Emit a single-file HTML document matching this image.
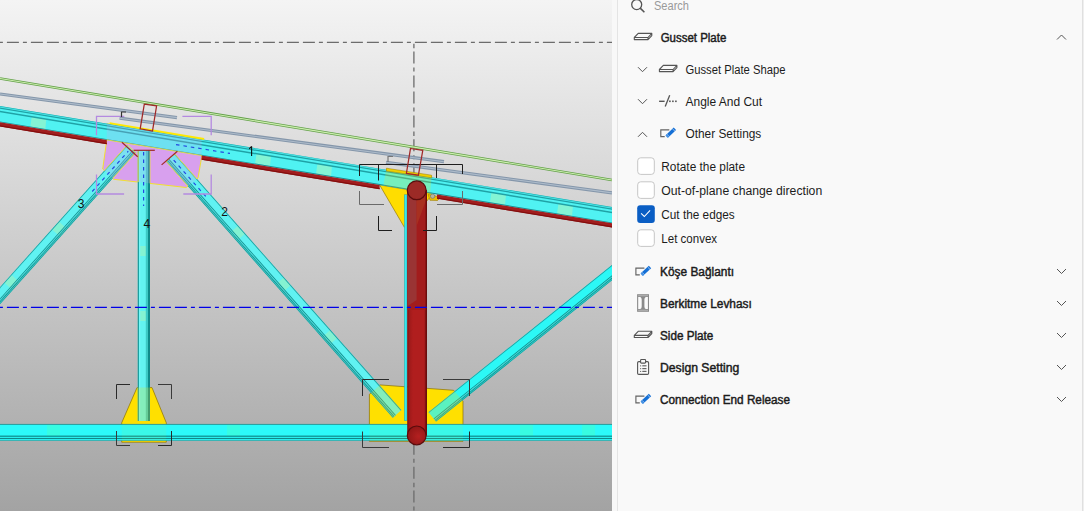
<!DOCTYPE html>
<html><head><meta charset="utf-8"><style>
html,body{margin:0;padding:0;width:1084px;height:511px;overflow:hidden;background:#f9f9f9}
svg{display:block}
</style></head><body>
<svg width="1084" height="511" viewBox="0 0 1084 511">
<defs><linearGradient id="bg" x1="0" y1="0" x2="0" y2="1"><stop offset="0" stop-color="#f4f4f4"/><stop offset="1" stop-color="#a3a3a3"/></linearGradient><linearGradient id="col" x1="0" y1="0" x2="1" y2="0"><stop offset="0" stop-color="#7a1212"/><stop offset="0.12" stop-color="#a01a1a"/><stop offset="0.3" stop-color="#b01e1e"/><stop offset="0.85" stop-color="#b01e1e"/><stop offset="0.93" stop-color="#981818"/><stop offset="1" stop-color="#5a0a0a"/></linearGradient><radialGradient id="cap" cx="0.6" cy="0.55" r="0.7"><stop offset="0" stop-color="#b42020"/><stop offset="1" stop-color="#8a1414"/></radialGradient><clipPath id="vp"><rect x="0" y="0" width="612" height="511"/></clipPath><clipPath id="memclip"><polygon points="-8.83,297.00 127.25,145.00 135.75,152.60 -0.34,304.60"/><polygon points="174.67,153.82 401.37,410.12 392.83,417.68 166.13,161.38"/><polygon points="428.54,412.22 658.54,227.53 666.06,236.89 436.06,421.58"/><polygon points="137.80,150.00 150.00,150.00 150.00,421.00 137.80,421.00"/><polygon points="-5.00,105.17 617.00,207.83 617.00,224.13 -5.00,121.47"/></clipPath><clipPath id="pinkclip"><polygon points="106.80,123.63 201.60,139.27 201.60,157.40 198.00,178.00 186.30,187.50 113.70,179.30 102.70,169.00 106.80,139.93"/></clipPath><clipPath id="chordclip"><rect x="-2" y="424.2" width="616" height="16.4"/></clipPath></defs>
<g clip-path="url(#vp)">
<rect x="0" y="0" width="612" height="511" fill="url(#bg)"/>
<line x1="-3.00" y1="42.30" x2="612.00" y2="42.30" stroke="#6c6c6c" stroke-width="1.3" stroke-dasharray="12 4 4 4 12 4 12 4 4 4" stroke-dashoffset="54.1"/>
<line x1="413.90" y1="43.70" x2="413.90" y2="511.00" stroke="#6c6c6c" stroke-width="1.3" stroke-dasharray="4.6 3.2 12 4 4 4 12 4 12 4 4 4 12 4"/>
<line x1="0.00" y1="78.50" x2="612.00" y2="180.00" stroke="#62a048" stroke-width="2.7"/>
<line x1="0.00" y1="78.50" x2="612.00" y2="180.00" stroke="#cdeeb0" stroke-width="1.1"/>
<line x1="0.00" y1="94.00" x2="177.00" y2="117.60" stroke="#8496aa" stroke-width="3.2"/>
<line x1="0.00" y1="94.00" x2="177.00" y2="117.60" stroke="#aebccb" stroke-width="1.1"/>
<line x1="119.60" y1="118.20" x2="444.00" y2="161.70" stroke="#8496aa" stroke-width="3.2"/>
<line x1="119.60" y1="118.20" x2="444.00" y2="161.70" stroke="#aebccb" stroke-width="1.1"/>
<line x1="386.00" y1="162.30" x2="612.00" y2="192.90" stroke="#8496aa" stroke-width="3.2"/>
<line x1="386.00" y1="162.30" x2="612.00" y2="192.90" stroke="#aebccb" stroke-width="1.1"/>
<polygon points="106.80,123.63 201.60,139.27 201.60,157.40 198.00,178.00 186.30,187.50 113.70,179.30 102.70,169.00 106.80,139.93" fill="#d8a0ee" stroke="#f2e030" stroke-width="1"/>
<polygon points="386.40,168.60 431.60,175.80 430.20,193.30 383.40,185.57" fill="#ffe000"/>
<polygon points="379.60,184.95 433.00,193.76 404.40,227.30" fill="#ffdd00" stroke="#9a7a00" stroke-width="0.7"/>
<polygon points="428.00,194.50 441.00,197.00 437.50,200.50 430.00,200.30" fill="#f0c000" stroke="#9a7a00" stroke-width="0.6"/>
<circle cx="432.6" cy="196.2" r="2.2" fill="#b8b8a0" stroke="#707060" stroke-width="0.6"/>
<polygon points="369.40,394.30 380.00,384.90 453.60,390.30 463.00,401.00 463.00,441.30 369.40,441.30" fill="#ffe000" stroke="#8a7000" stroke-width="0.7"/>
<polygon points="137.00,387.60 152.00,387.60 166.30,422.80 166.30,442.20 121.70,442.20 121.70,422.80" fill="#ffe000" stroke="#8a7000" stroke-width="0.7"/>
<polygon points="-8.83,297.00 127.25,145.00 135.75,152.60 -0.34,304.60" fill="#60f2f2"/>
<polygon points="4.58,282.92 11.58,275.10 19.18,281.90 12.18,289.72" fill="#84f2d2"/>
<polygon points="52.27,229.65 59.27,221.83 66.87,228.63 59.87,236.46" fill="#84f2d2"/>
<polygon points="-8.83,297.00 127.25,145.00 127.85,145.53 -8.24,297.53" fill="#1c9c9c"/>
<polygon points="-3.24,302.00 132.84,150.00 133.51,150.60 -2.57,302.60" fill="#12908e"/>
<polygon points="-2.57,302.60 133.51,150.60 134.18,151.20 -1.90,303.20" fill="#4ad4d4"/>
<polygon points="-1.90,303.20 134.18,151.20 134.85,151.80 -1.23,303.80" fill="#12908e"/>
<polygon points="-1.23,303.80 134.85,151.80 135.23,152.14 -0.86,304.14" fill="#3cc0c0"/>
<polygon points="-0.86,304.14 135.23,152.14 135.75,152.60 -0.34,304.60" fill="#12908e"/>
<polygon points="174.67,153.82 401.37,410.12 392.83,417.68 166.13,161.38" fill="#60f2f2"/>
<polygon points="237.72,226.02 244.68,233.88 237.04,240.64 230.08,232.77" fill="#84f2d2"/>
<polygon points="283.48,277.75 290.44,285.62 282.80,292.37 275.84,284.51" fill="#84f2d2"/>
<polygon points="329.99,330.33 336.95,338.20 329.31,344.95 322.35,337.09" fill="#84f2d2"/>
<polygon points="174.67,153.82 401.37,410.12 400.77,410.65 174.07,154.35" fill="#1c9c9c"/>
<polygon points="169.05,158.79 395.75,415.09 395.08,415.69 168.38,159.39" fill="#12908e"/>
<polygon points="168.38,159.39 395.08,415.69 394.40,416.29 167.70,159.99" fill="#4ad4d4"/>
<polygon points="167.70,159.99 394.40,416.29 393.73,416.88 167.03,160.58" fill="#12908e"/>
<polygon points="167.03,160.58 393.73,416.88 393.35,417.21 166.65,160.91" fill="#3cc0c0"/>
<polygon points="166.65,160.91 393.35,417.21 392.83,417.68 166.13,161.38" fill="#12908e"/>
<polygon points="428.54,412.22 658.54,227.53 666.06,236.89 436.06,421.58" fill="#2cf8f6"/>
<polygon points="428.54,412.22 658.54,227.53 659.04,228.16 429.04,412.85" fill="#1c9c9c"/>
<polygon points="433.61,418.54 663.61,233.85 664.18,234.55 434.18,419.24" fill="#12908e"/>
<polygon points="434.18,419.24 664.18,234.55 664.74,235.25 434.74,419.94" fill="#4ad4d4"/>
<polygon points="434.74,419.94 664.74,235.25 665.31,235.95 435.31,420.64" fill="#12908e"/>
<polygon points="435.31,420.64 665.31,235.95 665.62,236.34 435.62,421.03" fill="#3cc0c0"/>
<polygon points="435.62,421.03 665.62,236.34 666.06,236.89 436.06,421.58" fill="#12908e"/>
<rect x="137.8" y="150" width="12.2" height="271" fill="#62f2f0"/>
<rect x="138.6" y="246" width="10.6" height="10" fill="#84f2d2"/>
<rect x="138.6" y="311" width="10.6" height="10" fill="#84f2d2"/>
<rect x="137.8" y="150" width="1.1" height="271" fill="#0e8a8a"/>
<rect x="138.9" y="150" width="1.3" height="271" fill="#72f8f8"/>
<rect x="145.8" y="150" width="2.2" height="271" fill="#3cc8c4"/>
<rect x="148" y="150" width="2" height="271" fill="#0e8a8a"/>
<polygon points="-5.00,105.17 617.00,207.83 617.00,224.13 -5.00,121.47" fill="#50f2f2"/>
<polygon points="31.80,116.45 46.30,118.84 45.30,128.98 30.30,126.50" fill="#84f4d4"/>
<polygon points="256.50,153.53 271.00,155.92 270.00,166.06 255.00,163.58" fill="#84f4d4"/>
<polygon points="317.50,163.60 332.00,165.99 331.00,176.13 316.00,173.65" fill="#84f4d4"/>
<polygon points="491.50,192.31 506.00,194.71 505.00,204.84 490.00,202.37" fill="#84f4d4"/>
<polygon points="558.50,203.37 573.00,205.76 572.00,215.90 557.00,213.42" fill="#84f4d4"/>
<polygon points="-5.00,105.17 617.00,207.83 617.00,208.53 -5.00,105.87" fill="#2ab0b4"/>
<polygon points="-5.00,106.57 617.00,209.23 617.00,210.53 -5.00,107.87" fill="#1fa2a6"/>
<polygon points="-5.00,109.87 617.00,212.53 617.00,214.03 -5.00,111.37" fill="#1fa2a6"/>
<polygon points="-5.00,120.57 617.00,223.23 617.00,224.13 -5.00,121.47" fill="#1c8c90"/>
<polygon points="-5.00,121.47 106.80,139.93 106.80,144.13 -5.00,125.67" fill="#a21e1e"/>
<polygon points="-5.00,124.47 106.80,142.93 106.80,144.23 -5.00,125.77" fill="#840e0e"/>
<polygon points="201.60,155.57 379.60,184.95 379.60,189.15 201.60,159.77" fill="#a21e1e"/>
<polygon points="201.60,158.57 379.60,187.95 379.60,189.25 201.60,159.87" fill="#840e0e"/>
<polygon points="437.00,194.42 617.00,224.13 617.00,228.33 437.00,198.62" fill="#a21e1e"/>
<polygon points="437.00,197.42 617.00,227.13 617.00,228.43 437.00,198.72" fill="#840e0e"/>
<rect x="-2" y="424.2" width="616" height="16.4" fill="#2cfafa"/>
<rect x="47" y="425" width="13" height="11" fill="#38fce2"/>
<rect x="227" y="425" width="13" height="11" fill="#38fce2"/>
<rect x="520" y="425" width="13" height="11" fill="#38fce2"/>
<rect x="582" y="425" width="13" height="11" fill="#38fce2"/>
<rect x="-2" y="423.9" width="616" height="1" fill="#2a9a9a"/>
<rect x="-2" y="435.6" width="616" height="1.2" fill="#0e8a8a"/>
<rect x="-2" y="437.9" width="616" height="1.2" fill="#0e8a8a"/>
<rect x="-2" y="440.0" width="616" height="0.7" fill="#2aa4a4"/>
<g clip-path="url(#memclip)" opacity="0.22">
<polygon points="106.80,123.63 201.60,139.27 201.60,157.40 198.00,178.00 186.30,187.50 113.70,179.30 102.70,169.00 106.80,139.93" fill="#d8a0ee"/>
<polygon points="386.40,168.60 431.60,175.80 430.20,193.30 383.40,185.57" fill="#ffe000"/>
<polygon points="379.60,184.95 433.00,193.76 404.40,227.30" fill="#ffdf00"/>
<polygon points="369.40,394.30 380.00,384.90 453.60,390.30 463.00,401.00 463.00,441.30 369.40,441.30" fill="#ffe000"/>
<polygon points="137.00,387.60 152.00,387.60 166.30,422.80 166.30,442.20 121.70,442.20 121.70,422.80" fill="#ffe000"/>
</g>
<g clip-path="url(#chordclip)" opacity="0.07">
<polygon points="369.40,394.30 380.00,384.90 453.60,390.30 463.00,401.00 463.00,441.30 369.40,441.30" fill="#ffe000"/>
<polygon points="137.00,387.60 152.00,387.60 166.30,422.80 166.30,442.20 121.70,442.20 121.70,422.80" fill="#ffe000"/>
</g>
<g clip-path="url(#pinkclip)">
<polygon points="-8.83,297.00 127.25,145.00 135.75,152.60 -0.34,304.60" fill="none" stroke="#f4e838" stroke-width="0.9"/>
<polygon points="174.67,153.82 401.37,410.12 392.83,417.68 166.13,161.38" fill="none" stroke="#f4e838" stroke-width="0.9"/>
<line x1="138.10" y1="150.00" x2="138.10" y2="190.00" stroke="#f4e838" stroke-width="0.9"/>
<line x1="150.10" y1="150.00" x2="150.10" y2="190.00" stroke="#e8e040" stroke-width="0.7"/>
</g>
<line x1="176.00" y1="144.55" x2="230.00" y2="153.46" stroke="#2448e0" stroke-width="1.2" stroke-dasharray="3.5 4"/>
<line x1="92.22" y1="191.48" x2="128.24" y2="151.25" stroke="#2448e0" stroke-width="1.2" stroke-dasharray="3.5 4"/>
<line x1="173.65" y1="160.07" x2="207.44" y2="198.27" stroke="#2448e0" stroke-width="1.2" stroke-dasharray="3.5 4"/>
<line x1="143.60" y1="152.00" x2="143.60" y2="206.00" stroke="#2448e0" stroke-width="1.2" stroke-dasharray="3.5 4"/>
<polygon points="109.70,122.30 204.20,138.10 204.20,139.90 109.70,124.10" fill="#ffe800"/>
<line x1="106.80" y1="139.93" x2="201.60" y2="155.57" stroke="#e8e040" stroke-width="0.9"/>
<line x1="133.60" y1="150.30" x2="154.80" y2="150.30" stroke="#a02828" stroke-width="1.2"/>
<line x1="121.90" y1="142.30" x2="137.70" y2="156.70" stroke="#a02828" stroke-width="1.2"/>
<line x1="177.40" y1="151.20" x2="161.60" y2="164.90" stroke="#a02828" stroke-width="1.2"/>
<polygon points="386.40,168.20 431.60,175.20 431.60,177.80 386.40,171.00" fill="#f0d000" stroke="#9a7a00" stroke-width="0.5"/>
<rect x="404.3" y="194.8" width="2.7" height="226" fill="#38e8ee" stroke="#2a9090" stroke-width="0.4"/>
<rect x="407.2" y="190" width="19.6" height="245.4" fill="url(#col)"/>
<rect x="407.6" y="190" width="18.6" height="120" fill="#a21c1c"/>
<polygon points="407.6,190 416.6,190 416.6,300 407.6,306" fill="#9a3434"/>
<polygon points="416.6,190 426,190 426,200 416.6,226" fill="#a83020"/>
<rect x="425.6" y="190" width="1.4" height="245.4" fill="#6a0c0c"/>
<circle cx="416.7" cy="190.3" r="9.4" fill="#9c2a26" stroke="#5a0c0c" stroke-width="1.3"/>
<circle cx="416.7" cy="435.4" r="9.4" fill="url(#cap)" stroke="#5a0c0c" stroke-width="1.2"/>
<line x1="-3.00" y1="307.30" x2="612.00" y2="307.30" stroke="#0000e8" stroke-width="1.2" stroke-dasharray="12 4 4 4 12 4 12 4 4 4" stroke-dashoffset="54.1"/>
<polyline points="124.30,116.40 96.50,116.40 96.50,135.20" fill="none" stroke="#b48ae0" stroke-width="1.3"/>
<polyline points="182.40,116.40 211.20,116.40 211.20,135.20" fill="none" stroke="#b48ae0" stroke-width="1.3"/>
<polyline points="96.50,174.60 96.50,194.00 124.10,194.00" fill="none" stroke="#b48ae0" stroke-width="1.3"/>
<polyline points="211.20,174.60 211.20,194.00 183.30,194.00" fill="none" stroke="#b48ae0" stroke-width="1.3"/>
<polyline points="359.50,176.00 359.50,164.50 462.50,164.50 462.50,174.00" fill="none" stroke="#1e1e1e" stroke-width="1"/>
<line x1="378.50" y1="164.50" x2="378.50" y2="180.50" stroke="#1e1e1e" stroke-width="1"/>
<line x1="436.50" y1="164.50" x2="436.50" y2="178.00" stroke="#1e1e1e" stroke-width="1"/>
<polyline points="359.50,191.00 359.50,204.50 384.00,204.50" fill="none" stroke="#6a6a6a" stroke-width="1"/>
<polyline points="462.50,191.00 462.50,204.50 437.00,204.50" fill="none" stroke="#6a6a6a" stroke-width="1"/>
<polyline points="378.50,216.00 378.50,230.50 392.00,230.50" fill="none" stroke="#1e1e1e" stroke-width="1"/>
<polyline points="436.50,216.00 436.50,230.50 423.00,230.50" fill="none" stroke="#1e1e1e" stroke-width="1"/>
<polyline points="389.00,379.50 362.50,379.50 362.50,396.00" fill="none" stroke="#2a2a2a" stroke-width="1"/>
<polyline points="443.00,379.50 469.50,379.50 469.50,396.00" fill="none" stroke="#3a3a3a" stroke-width="1"/>
<polyline points="362.50,431.50 362.50,447.50 389.00,447.50" fill="none" stroke="#3a3a3a" stroke-width="1"/>
<polyline points="469.50,431.50 469.50,447.50 443.00,447.50" fill="none" stroke="#2a2a2a" stroke-width="1"/>
<polyline points="130.00,384.50 116.50,384.50 116.50,399.00" fill="none" stroke="#2a2a2a" stroke-width="1"/>
<polyline points="158.00,384.50 171.50,384.50 171.50,399.00" fill="none" stroke="#3a3a3a" stroke-width="1"/>
<polyline points="116.50,431.00 116.50,445.50 130.00,445.50" fill="none" stroke="#3a3a3a" stroke-width="1"/>
<polyline points="171.50,431.00 171.50,445.50 158.00,445.50" fill="none" stroke="#2a2a2a" stroke-width="1"/>
<polygon points="144.30,104.10 156.60,105.90 152.50,131.10 140.20,128.80" fill="none" stroke="#a02828" stroke-width="1.25"/>
<polygon points="410.50,148.50 422.80,150.30 418.40,175.20 406.40,173.40" fill="none" stroke="#a02828" stroke-width="1.25"/>
<polyline points="126.00,112.00 121.50,112.00 121.50,117.00" fill="none" stroke="#333" stroke-width="1.2"/>
<polyline points="393.00,156.50 388.00,156.50 388.00,162.00" fill="none" stroke="#777" stroke-width="1.2"/>
<path d="M251.6,146.3 V155.9 M249.2,148.9 L251.6,146.5" fill="none" stroke="#111" stroke-width="1.1"/>
<text x="221.2" y="215.8" font-family="Liberation Sans" font-size="12" fill="#111">2</text>
<text x="77.8" y="207.7" font-family="Liberation Sans" font-size="12" fill="#111">3</text>
<text x="143.4" y="227.6" font-family="Liberation Sans" font-size="12" fill="#111">4</text>
</g>
<rect x="612" y="0" width="5" height="511" fill="#f8f8f8"/>
<rect x="617" y="0" width="1" height="511" fill="#e4e4e4"/>
<rect x="618" y="0" width="464" height="511" fill="#f9f9f9"/>
<rect x="1082" y="0" width="1" height="511" fill="#e0e0e0"/>
<rect x="1083" y="0" width="1" height="511" fill="#efefef"/>
<circle cx="636.7" cy="4.6" r="5" fill="none" stroke="#555555" stroke-width="1.3"/>
<line x1="640.20" y1="8.10" x2="644.40" y2="12.20" stroke="#555555" stroke-width="1.6"/>
<text x="654" y="10.3" font-family="Liberation Sans" font-size="12" fill="#9a9a9a" textLength="35" lengthAdjust="spacingAndGlyphs">Search</text>
<path d="M638.1999999999999,33.4 L651.8,33.4 L648.0,37.5 L634.3,37.5 Z M634.3,37.5 L634.3,39.6 L648.0,39.6 L648.0,37.5 M648.0,39.6 L651.8,35.6 L651.8,33.4" fill="none" stroke="#555" stroke-width="1.1" stroke-linejoin="round"/>
<text x="660.7" y="41.5" font-family="Liberation Sans" font-size="12" stroke="#1c1c1c" stroke-width="0.45" fill="#1c1c1c" textLength="65.6" lengthAdjust="spacingAndGlyphs">Gusset Plate</text>
<polyline points="1057.00,39.50 1061.50,35.00 1066.00,39.50" fill="none" stroke="#555" stroke-width="1"/>
<polyline points="638.00,67.20 642.50,71.70 647.00,67.20" fill="none" stroke="#555" stroke-width="1"/>
<path d="M663.3,65.4 L676.9,65.4 L673.1,69.5 L659.4,69.5 Z M659.4,69.5 L659.4,71.60000000000001 L673.1,71.60000000000001 L673.1,69.5 M673.1,71.60000000000001 L676.9,67.60000000000001 L676.9,65.4" fill="none" stroke="#555" stroke-width="1.1" stroke-linejoin="round"/>
<text x="685.5" y="73.9" font-family="Liberation Sans" font-size="12" fill="#1c1c1c" textLength="100" lengthAdjust="spacingAndGlyphs">Gusset Plate Shape</text>
<polyline points="638.00,99.20 642.50,103.70 647.00,99.20" fill="none" stroke="#555" stroke-width="1"/>
<line x1="659.10" y1="101.30" x2="664.60" y2="101.30" stroke="#555555" stroke-width="1.4"/>
<line x1="665.20" y1="106.50" x2="669.70" y2="95.30" stroke="#555555" stroke-width="1.3"/>
<rect x="669.1" y="100.5" width="1.6" height="1.6" fill="#555555"/>
<rect x="672.1" y="100.5" width="1.6" height="1.6" fill="#555555"/>
<rect x="675.1" y="100.5" width="1.6" height="1.6" fill="#555555"/>
<text x="685.5" y="106.1" font-family="Liberation Sans" font-size="12" fill="#1c1c1c" textLength="76.6" lengthAdjust="spacingAndGlyphs">Angle And Cut</text>
<polyline points="638.00,136.80 642.50,132.30 647.00,136.80" fill="none" stroke="#555" stroke-width="1"/>
<polyline points="669.30,129.90 660.80,129.90 660.80,136.60 664.70,136.60" fill="none" stroke="#636363" stroke-width="1.15"/>
<line x1="666.80" y1="136.40" x2="674.90" y2="128.80" stroke="#1570d6" stroke-width="3.4"/>
<line x1="666.50" y1="136.70" x2="667.90" y2="135.40" stroke="#4a94e4" stroke-width="3.0"/>
<line x1="672.80" y1="129.10" x2="675.20" y2="131.50" stroke="#f9f9f9" stroke-width="0.6"/>
<line x1="667.20" y1="134.10" x2="669.60" y2="136.50" stroke="#cfe2f8" stroke-width="0.5"/>
<text x="685.5" y="137.8" font-family="Liberation Sans" font-size="12" fill="#1c1c1c" textLength="75.8" lengthAdjust="spacingAndGlyphs">Other Settings</text>
<rect x="637.7" y="157.8" width="16.6" height="16.6" rx="3" fill="#ffffff" stroke="#c6c6c6" stroke-width="1"/>
<text x="661.3" y="170.5" font-family="Liberation Sans" font-size="12" fill="#1c1c1c" textLength="83.7" lengthAdjust="spacingAndGlyphs">Rotate the plate</text>
<rect x="637.7" y="181.8" width="16.6" height="16.6" rx="3" fill="#ffffff" stroke="#c6c6c6" stroke-width="1"/>
<text x="661.3" y="194.6" font-family="Liberation Sans" font-size="12" fill="#1c1c1c" textLength="160.9" lengthAdjust="spacingAndGlyphs">Out-of-plane change direction</text>
<rect x="637.2" y="205.3" width="17.6" height="17.6" rx="3" fill="#0a5ec4"/>
<polyline points="641.10,213.40 644.30,216.50 650.10,210.40" fill="none" stroke="#ffffff" stroke-width="1.05"/>
<text x="661.3" y="218.9" font-family="Liberation Sans" font-size="12" fill="#1c1c1c" textLength="73.4" lengthAdjust="spacingAndGlyphs">Cut the edges</text>
<rect x="637.7" y="229.8" width="16.6" height="16.6" rx="3" fill="#ffffff" stroke="#c6c6c6" stroke-width="1"/>
<text x="661.3" y="242.6" font-family="Liberation Sans" font-size="12" fill="#1c1c1c" textLength="55.8" lengthAdjust="spacingAndGlyphs">Let convex</text>
<polyline points="644.40,268.10 635.90,268.10 635.90,274.80 639.80,274.80" fill="none" stroke="#636363" stroke-width="1.15"/>
<line x1="641.90" y1="274.60" x2="650.00" y2="267.00" stroke="#1570d6" stroke-width="3.4"/>
<line x1="641.60" y1="274.90" x2="643.00" y2="273.60" stroke="#4a94e4" stroke-width="3.0"/>
<line x1="647.90" y1="267.30" x2="650.30" y2="269.70" stroke="#f9f9f9" stroke-width="0.6"/>
<line x1="642.30" y1="272.30" x2="644.70" y2="274.70" stroke="#cfe2f8" stroke-width="0.5"/>
<text x="660" y="276.3" font-family="Liberation Sans" font-size="12" stroke="#1c1c1c" stroke-width="0.45" fill="#1c1c1c" textLength="74" lengthAdjust="spacingAndGlyphs">Köşe Bağlantı</text>
<polyline points="1057.00,269.00 1061.50,273.50 1066.00,269.00" fill="none" stroke="#555" stroke-width="1"/>
<rect x="637.1" y="294.2" width="11.9" height="17.6" fill="#8a8a8a"/>
<path d="M638.2,297 H640.3 Q641.7,297.6 641.7,299.6 V306.4 Q641.7,308.4 640.3,309 H638.2 Z M647.9,297 H645.8 Q644.4,297.6 644.4,299.6 V306.4 Q644.4,308.4 645.8,309 H647.9 Z" fill="#fbfbfb"/>
<rect x="638.1" y="295.1" width="9.9" height="1.2" fill="#b0b0b0"/>
<rect x="638.1" y="309.7" width="9.9" height="1.2" fill="#b0b0b0"/>
<text x="660" y="308.2" font-family="Liberation Sans" font-size="12" stroke="#1c1c1c" stroke-width="0.45" fill="#1c1c1c" textLength="91.8" lengthAdjust="spacingAndGlyphs">Berkitme Levhası</text>
<polyline points="1057.00,301.00 1061.50,305.50 1066.00,301.00" fill="none" stroke="#555" stroke-width="1"/>
<path d="M638.1999999999999,331.3 L651.8,331.3 L648.0,335.40000000000003 L634.3,335.40000000000003 Z M634.3,335.40000000000003 L634.3,337.5 L648.0,337.5 L648.0,335.40000000000003 M648.0,337.5 L651.8,333.5 L651.8,331.3" fill="none" stroke="#555" stroke-width="1.1" stroke-linejoin="round"/>
<text x="660" y="340.2" font-family="Liberation Sans" font-size="12" stroke="#1c1c1c" stroke-width="0.45" fill="#1c1c1c" textLength="53.3" lengthAdjust="spacingAndGlyphs">Side Plate</text>
<polyline points="1057.00,333.00 1061.50,337.50 1066.00,333.00" fill="none" stroke="#555" stroke-width="1"/>
<rect x="637.6" y="361.6" width="11" height="12.8" rx="1.2" fill="none" stroke="#555555" stroke-width="1.1"/>
<rect x="640.6" y="359.5" width="5" height="3.6" rx="0.8" fill="#f9f9f9" stroke="#555555" stroke-width="1.1"/>
<rect x="640" y="365.3" width="1.2" height="1.1" fill="#777"/>
<rect x="642.3" y="365.2" width="4.2" height="1.2" fill="#666"/>
<rect x="640" y="368.1" width="1.2" height="1.1" fill="#777"/>
<rect x="642.3" y="368.0" width="4.2" height="1.2" fill="#666"/>
<rect x="640" y="370.9" width="1.2" height="1.1" fill="#777"/>
<rect x="642.3" y="370.79999999999995" width="4.2" height="1.2" fill="#666"/>
<text x="660" y="372.4" font-family="Liberation Sans" font-size="12" stroke="#1c1c1c" stroke-width="0.45" fill="#1c1c1c" textLength="79.3" lengthAdjust="spacingAndGlyphs">Design Setting</text>
<polyline points="1057.00,365.00 1061.50,369.50 1066.00,365.00" fill="none" stroke="#555" stroke-width="1"/>
<polyline points="644.40,396.10 635.90,396.10 635.90,402.80 639.80,402.80" fill="none" stroke="#636363" stroke-width="1.15"/>
<line x1="641.90" y1="402.60" x2="650.00" y2="395.00" stroke="#1570d6" stroke-width="3.4"/>
<line x1="641.60" y1="402.90" x2="643.00" y2="401.60" stroke="#4a94e4" stroke-width="3.0"/>
<line x1="647.90" y1="395.30" x2="650.30" y2="397.70" stroke="#f9f9f9" stroke-width="0.6"/>
<line x1="642.30" y1="400.30" x2="644.70" y2="402.70" stroke="#cfe2f8" stroke-width="0.5"/>
<text x="660" y="403.7" font-family="Liberation Sans" font-size="12" stroke="#1c1c1c" stroke-width="0.45" fill="#1c1c1c" textLength="130" lengthAdjust="spacingAndGlyphs">Connection End Release</text>
<polyline points="1057.00,397.00 1061.50,401.50 1066.00,397.00" fill="none" stroke="#555" stroke-width="1"/>
</svg>
</body></html>
